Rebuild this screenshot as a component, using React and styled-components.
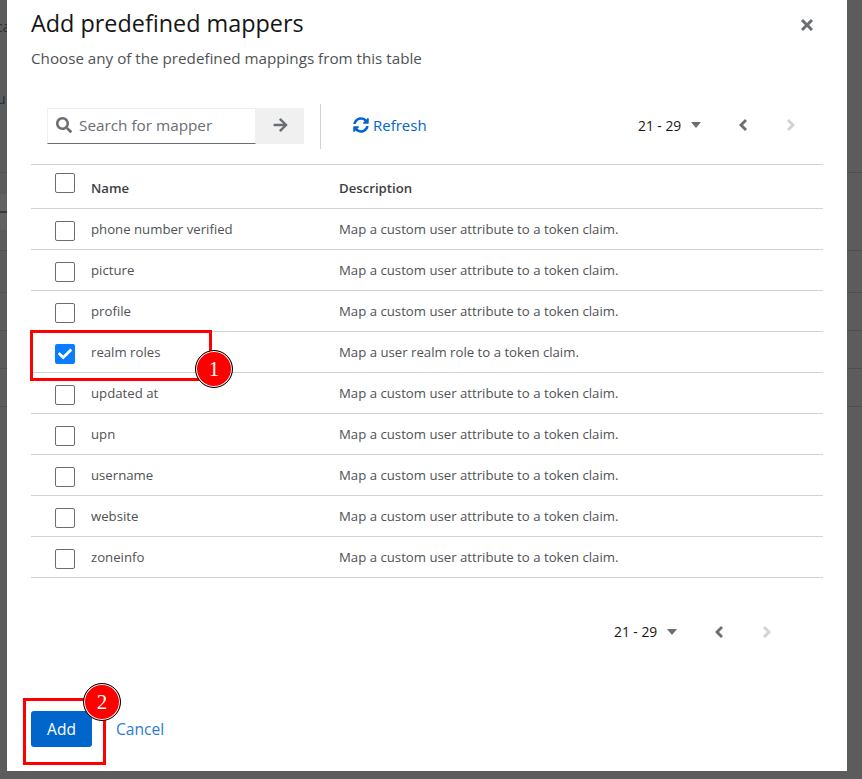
import styled, { createGlobalStyle } from "styled-components";

const Global = createGlobalStyle`
  html, body { margin: 0; padding: 0; background: #5c5c5c; }
  * { box-sizing: border-box; }
`;

const Backdrop = styled.div`
  position: relative;
  width: 862px;
  height: 779px;
  overflow: hidden;
  background: #5c5c5c;
  padding: 0 15px 8px 7px;
  font-family: "Open Sans", sans-serif;
`;

const StrayLine = styled.div`
  position: absolute;
  left: 0;
  right: 0;
  top: ${(p) => p.$top}px;
  height: 1px;
  background: #505050;
`;

const StrayBand = styled.div`
  position: absolute;
  left: 0;
  top: 194px;
  width: 7px;
  height: 36px;
  background: #636363;
  display: flex;
  align-items: center;
  &::after {
    content: "";
    width: 7px;
    height: 2px;
    background: #3a3a3a;
  }
`;

const StrayText = styled.span`
  position: absolute;
  left: ${(p) => p.$left}px;
  top: ${(p) => p.$top}px;
  font-size: 14px;
  color: ${(p) => p.$color};
`;

const Modal = styled.div`
  position: relative;
  display: flex;
  flex-direction: column;
  height: 100%;
  background: #fff;
  padding: 0 24px 0 24px;
`;

const Close = styled.button`
  position: absolute;
  top: 19px;
  right: 34px;
  width: 12px;
  height: 12px;
  padding: 0;
  border: 0;
  background: none;
  color: #6a6e73;
  display: flex;
`;

const Title = styled.h1`
  margin: 6px 0 0;
  font-family: "Open Sans", sans-serif;
  font-weight: 400;
  font-size: 23.4px;
  line-height: 34px;
  color: #151515;
`;

const Subtitle = styled.p`
  margin: 8px 0 0;
  font-size: 15.2px;
  line-height: 20px;
  color: #4f5255;
`;

const Toolbar = styled.div`
  display: flex;
  align-items: center;
  height: 46px;
  margin-top: 35px;
  padding-left: 16px;
`;

const SearchGroup = styled.div`
  display: flex;
  height: 36px;
  flex-shrink: 0;
`;

const SearchField = styled.div`
  display: flex;
  align-items: center;
  gap: 7px;
  width: 209px;
  flex-shrink: 0;
  padding: 0 0 2px 8px;
  border: 1px solid #f0f0f0;
  border-bottom: 1px solid #6a6e73;
  font-size: 15.3px;
  color: #6a6e73;
  white-space: nowrap;
`;

const SearchButton = styled.div`
  display: flex;
  align-items: center;
  justify-content: center;
  width: 48px;
  flex-shrink: 0;
  padding-bottom: 2px;
  background: #f0f0f0;
  color: #6a6e73;
`;

const Divider = styled.div`
  width: 1px;
  height: 45px;
  margin: 0 32px 0 16px;
  background: #d2d2d2;
`;

const RefreshLink = styled.a`
  display: flex;
  align-items: center;
  gap: 4px;
  padding-bottom: 2px;
  font-size: 15px;
  color: #0066cc;
`;

const Pager = styled.div`
  display: flex;
  align-items: center;
  margin-left: auto;
  margin-right: ${(p) => p.$right}px;
  padding-bottom: 2px;
  font-size: 13.8px;
  color: #151515;
`;

const Range = styled.span`
  width: 53px;
  white-space: nowrap;
`;

const Caret = styled.svg`
  width: 10px;
  height: 6px;
  margin-right: 38px;
  fill: #6a6e73;
`;

const PageArrow = styled.svg`
  width: 8px;
  height: 12px;
  margin-right: 40px;
  fill: ${(p) => (p.$disabled ? "#d2d2d2" : "#6a6e73")};
  &:last-child { margin-right: 0; }
`;

const Table = styled.table`
  width: 100%;
  margin-top: 15px;
  border-collapse: collapse;
  border-top: 1px solid #d2d2d2;
  font-size: 13.2px;
  color: #4f5255;
`;

const HeadRow = styled.tr`
  border-bottom: 1px solid #d2d2d2;
`;

const HeadCheck = styled.th`
  width: 60px;
  height: 44px;
  padding: 8px 0 0 24px;
  vertical-align: top;
`;

const HeadCell = styled.th`
  height: 44px;
  padding: 3px 0 0;
  text-align: left;
  font-weight: 600;
  font-size: 13.2px;
  color: #3c3f42;
  width: ${(p) => (p.$w ? `${p.$w}px` : "auto")};
`;

const Row = styled.tr`
  height: 41px;
  border-bottom: 1px solid #d2d2d2;
`;

const Cell = styled.td`
  padding: 0;
`;

const CheckCell = styled.td`
  width: 60px;
  padding: 4px 0 0 24px;
`;

const Box = styled.span`
  display: block;
  width: 20px;
  height: 20px;
  border: 1px solid #6a6e73;
  border-radius: 2px;
  background: #fff;
`;

const CheckedBox = styled(Box)`
  border: 0;
  background: #0a7cff;
  display: flex;
  align-items: center;
  justify-content: center;
`;

const BottomPager = styled.div`
  display: flex;
  margin-top: 44px;
`;

const Footer = styled.div`
  display: flex;
  align-items: center;
  gap: 24px;
  margin-top: auto;
  margin-bottom: 24px;
`;

const AddButton = styled.button`
  width: 61px;
  height: 36px;
  border: 0;
  border-radius: 3px;
  background: #0066cc;
  color: #fff;
  font-family: inherit;
  font-size: 15.5px;
`;

const CancelLink = styled.a`
  font-size: 15.6px;
  color: #2b7cd3;
`;

const Callout = styled.div`
  position: absolute;
  border: 3px solid #ff0000;
  left: ${(p) => p.$x}px;
  top: ${(p) => p.$y}px;
  width: ${(p) => p.$w}px;
  height: ${(p) => p.$h}px;
`;

const Badge = styled.div`
  position: absolute;
  left: ${(p) => p.$x}px;
  top: ${(p) => p.$y}px;
  width: 38px;
  height: 38px;
  border-radius: 50%;
  background: #ff0000;
  border: 1px solid #000;
  box-shadow: inset 0 0 0 1px #fff;
  color: #fff;
  display: flex;
  align-items: center;
  justify-content: center;
  font-family: "Liberation Serif", serif;
  font-size: 21px;
  font-weight: 400;
`;

const rows = [
  ["phone number verified", "Map a custom user attribute to a token claim."],
  ["picture", "Map a custom user attribute to a token claim."],
  ["profile", "Map a custom user attribute to a token claim."],
  ["realm roles", "Map a user realm role to a token claim.", true],
  ["updated at", "Map a custom user attribute to a token claim."],
  ["upn", "Map a custom user attribute to a token claim."],
  ["username", "Map a custom user attribute to a token claim."],
  ["website", "Map a custom user attribute to a token claim."],
  ["zoneinfo", "Map a custom user attribute to a token claim."],
];

const PagerBlock = ({ right }) => (
  <Pager $right={right}>
    <Range>21 - 29</Range>
    <Caret viewBox="0 0 10 6"><path d="M0 0h10L5 6z" /></Caret>
    <PageArrow viewBox="0 0 8 12"><path d="M6 0l2 2-4 4 4 4-2 2-6-6z" /></PageArrow>
    <PageArrow $disabled viewBox="0 0 8 12"><path d="M2 0L0 2l4 4-4 4 2 2 6-6z" /></PageArrow>
  </Pager>
);

const App = () => (
  <Backdrop>
    <Global />
    <StrayText $left={-4} $top={17} $color="#2e2e2e">ca</StrayText>
    <StrayText $left={-3} $top={89} $color="#1c2f45">u</StrayText>
    <StrayLine $top={172} />
    <StrayBand />
    <StrayLine $top={250} />
    <StrayLine $top={292} />
    <StrayLine $top={330} />
    <StrayLine $top={368} />
    <StrayLine $top={406} />
    <Modal>
      <Close aria-label="Close">
        <svg viewBox="0 0 16 16" width="12" height="12" fill="currentColor">
          <path d="M2.800 0L8 5.200 13.200 0 16 2.800 10.800 8 16 13.200 13.200 16 8 10.800 2.800 16 0 13.200 5.200 8 0 2.800z" />
        </svg>
      </Close>
      <Title>Add predefined mappers</Title>
      <Subtitle>Choose any of the predefined mappings from this table</Subtitle>
      <Toolbar>
        <SearchGroup>
          <SearchField>
            <svg viewBox="0 0 512 512" width="16" height="16" fill="#6a6e73">
              <path d="M505 442.700L405.300 343c-4.500-4.500-10.600-7-17-7H372c27.600-35.300 44-79.700 44-128C416 93.100 322.900 0 208 0S0 93.100 0 208s93.100 208 208 208c48.300 0 92.700-16.400 128-44v16.300c0 6.400 2.500 12.500 7 17l99.700 99.700c9.400 9.400 24.600 9.400 33.900 0l28.300-28.300c9.400-9.400 9.400-24.600.1-34zM208 336c-70.700 0-128-57.200-128-128 0-70.700 57.200-128 128-128 70.700 0 128 57.200 128 128 0 70.700-57.200 128-128 128z" />
            </svg>
            Search for mapper
          </SearchField>
          <SearchButton>
            <svg viewBox="0 0 448 512" width="15" height="16" fill="currentColor">
              <path d="M190.500 66.900l22.200-22.200c9.400-9.400 24.600-9.400 33.900 0L441 239c9.400 9.400 9.400 24.600 0 33.900L246.600 467.300c-9.400 9.400-24.600 9.400-33.900 0l-22.200-22.200c-9.500-9.500-9.300-25 .4-34.300L311.400 296H24c-13.300 0-24-10.700-24-24v-32c0-13.300 10.700-24 24-24h287.400L190.900 101.200c-9.800-9.300-10-24.800-.4-34.300z" />
            </svg>
          </SearchButton>
        </SearchGroup>
        <Divider />
        <RefreshLink>
          <svg viewBox="0 0 512 512" width="16" height="16" fill="currentColor">
            <path d="M370.720 133.280C339.458 104.008 298.888 87.962 255.848 88c-77.458.068-144.328 53.178-162.791 126.850-1.344 5.363-6.122 9.150-11.651 9.150H24.103c-7.498 0-13.194-6.807-11.807-14.176C33.933 94.924 134.813 8 256 8c66.448 0 126.791 26.136 171.315 68.685L463.030 40.970C478.149 25.851 504 36.559 504 57.941V192c0 13.255-10.745 24-24 24H345.941c-21.382 0-32.090-25.851-16.971-40.971l41.750-41.749zM32 296h134.059c21.382 0 32.090 25.851 16.971 40.971l-41.750 41.750c31.262 29.273 71.835 45.319 114.876 45.280 77.418-.070 144.315-53.144 162.787-126.849 1.344-5.363 6.122-9.150 11.651-9.150h57.304c7.498 0 13.194 6.807 11.807 14.176C478.067 417.076 377.187 504 256 504c-66.448 0-126.791-26.136-171.315-68.685L48.970 471.030C33.851 486.149 8 475.441 8 454.059V320c0-13.255 10.745-24 24-24z" />
          </svg>
          Refresh
        </RefreshLink>
        <PagerBlock right={28} />
      </Toolbar>
      <Table>
        <thead>
          <HeadRow>
            <HeadCheck><Box /></HeadCheck>
            <HeadCell $w={248}>Name</HeadCell>
            <HeadCell>Description</HeadCell>
          </HeadRow>
        </thead>
        <tbody>
          {rows.map(([name, desc, on]) => (
            <Row key={name}>
              <CheckCell>
                {on ? (
                  <CheckedBox>
                    <svg viewBox="0 0 512 512" width="14" height="14" fill="#fff">
                      <path d="M173.900 439.400l-166.400-166.400c-10-10-10-26.200 0-36.200l36.200-36.200c10-10 26.200-10 36.200 0L192 312.700 432.100 72.600c10-10 26.200-10 36.200 0l36.200 36.200c10 10 10 26.200 0 36.200L210.100 439.400c-10 10-26.200 10-36.200 0z" />
                    </svg>
                  </CheckedBox>
                ) : (
                  <Box />
                )}
              </CheckCell>
              <Cell>{name}</Cell>
              <Cell>{desc}</Cell>
            </Row>
          ))}
        </tbody>
      </Table>
      <BottomPager>
        <PagerBlock right={52} />
      </BottomPager>
      <Footer>
        <AddButton>Add</AddButton>
        <CancelLink>Cancel</CancelLink>
      </Footer>
    </Modal>
    <Callout $x={30} $y={330} $w={182} $h={51} />
    <Callout $x={23} $y={698} $w={83} $h={67} />
    <Badge $x={195} $y={350}>1</Badge>
    <Badge $x={83} $y={683}>2</Badge>
  </Backdrop>
);

export default App;
